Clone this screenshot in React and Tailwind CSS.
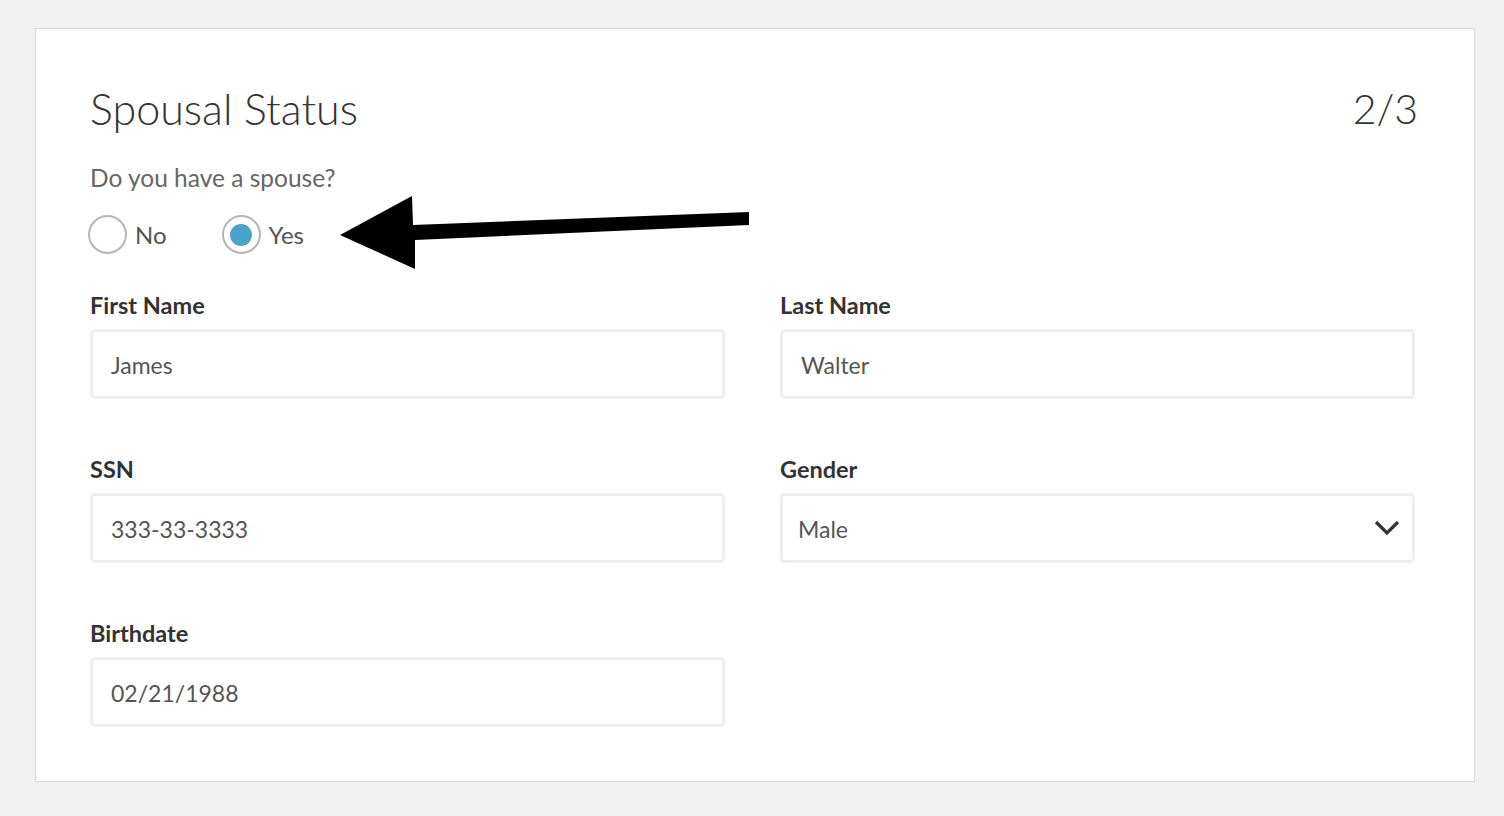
import { useState } from 'react';

function Field({ label, children }) {
  return (
    <div className="flex flex-col">
      <label className="text-[23.5px] leading-[28px] font-bold text-[#333] mb-[10px]">{label}</label>
      {children}
    </div>
  );
}

function TextBox({ value }) {
  return (
    <div className="h-[70px] rounded-[5px] border-[3px] border-[#efefef] bg-white flex items-center pl-[18px] pt-[3px] text-[23px] text-[#555]">
      {value}
    </div>
  );
}

function Radio({ label, checked, onClick }) {
  return (
    <button onClick={onClick} className="flex items-center gap-[8px]">
      <span className="w-[39px] h-[39px] rounded-full border-2 border-[#b5b5b5] bg-white flex items-center justify-center">
        {checked && <span className="w-[22px] h-[22px] rounded-full bg-[#4aa3c8]" />}
      </span>
      <span className="text-[24px] leading-[28px] text-[#555]">{label}</span>
    </button>
  );
}

export default function App() {
  const [spouse, setSpouse] = useState('yes');

  return (
    <div className="relative min-h-screen bg-[#f1f1f1] pt-[28px] pl-[35px] pr-[29px]" style={{ fontFamily: 'Lato, "Open Sans", sans-serif' }}>
      <div className="w-[1440px] h-[754px] bg-white border border-[#d9d9d9] pl-[54px] pr-[56px] pt-[57px]">
        {/* header */}
        <div className="flex items-center justify-between h-[46px]">
          <h1 className="text-[43px] leading-[46px] font-light text-[#333]">Spousal Status</h1>
          <span className="text-[41px] leading-[46px] font-light text-[#333]">2/3</span>
        </div>

        <p className="mt-[30px] text-[24.5px] leading-[32px] text-[#666]">Do you have a spouse?</p>

        <div className="mt-[21px] flex items-center gap-[55px] -ml-[2px]">
          <Radio label="No" checked={spouse === 'no'} onClick={() => setSpouse('no')} />
          <Radio label="Yes" checked={spouse === 'yes'} onClick={() => setSpouse('yes')} />
        </div>

        <div className="mt-[37px] grid grid-cols-[635px_635px] gap-x-[55px] gap-y-[56px]">
          <Field label="First Name">
            <TextBox value="James" />
          </Field>
          <Field label="Last Name">
            <TextBox value="Walter" />
          </Field>
          <Field label="SSN">
            <TextBox value="333-33-3333" />
          </Field>
          <Field label="Gender">
            <div className="h-[70px] rounded-[5px] border-[3px] border-[#efefef] bg-white flex items-center justify-between pl-[15px] pr-[12px] text-[23px] text-[#555]">
              <span className="pt-[3px]">Male</span>
              <svg width="26" height="16" viewBox="0 0 26 16" fill="none">
                <path d="M2 2 L13 13 L24 2" stroke="#333" strokeWidth="3.2" />
              </svg>
            </div>
          </Field>
          <Field label="Birthdate">
            <TextBox value="02/21/1988" />
          </Field>
        </div>
      </div>

      {/* annotation arrow */}
      <svg className="absolute left-[338px] top-[194px]" width="414" height="78" viewBox="0 0 414 78">
        <polygon points="2,41 74,2 75,31 411,18 411,31 77,46 77,75" fill="#000" />
      </svg>
    </div>
  );
}
